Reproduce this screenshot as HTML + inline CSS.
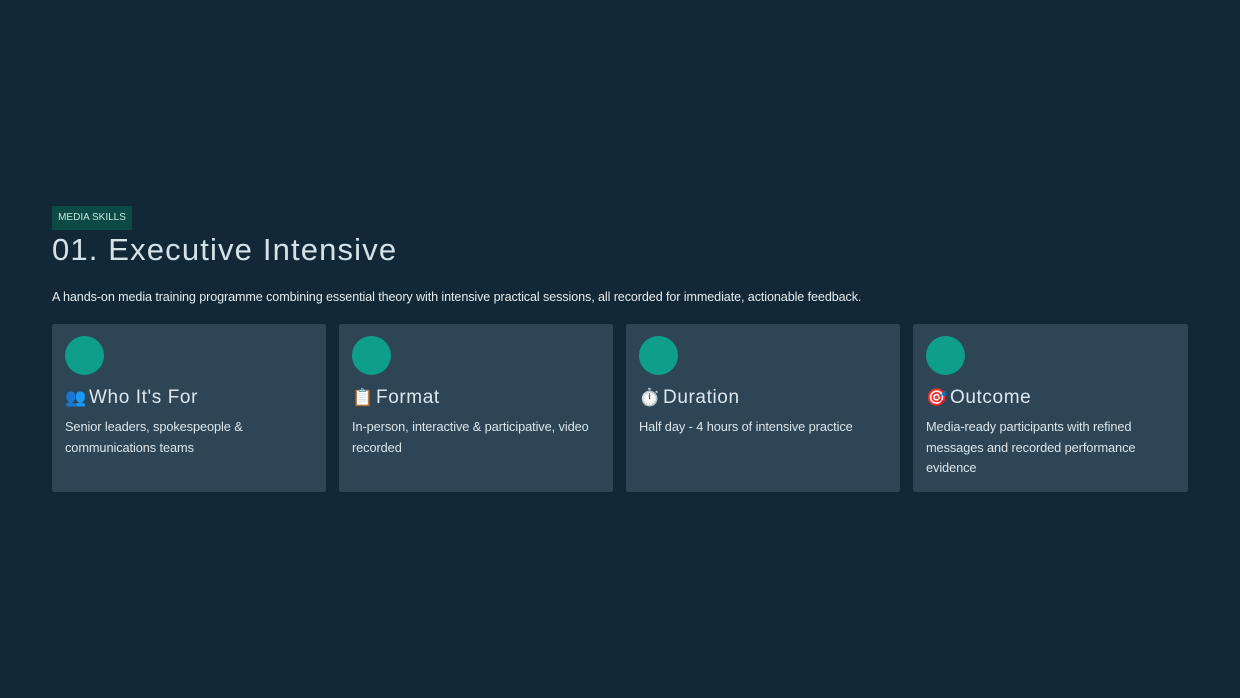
<!DOCTYPE html>
<html><head><meta charset="utf-8"><style>
*{margin:0;padding:0;box-sizing:border-box}
body{width:1240px;height:698px;background:#132836;font-family:"Liberation Sans",sans-serif;position:relative;overflow:hidden;color:#e6eef2}
.badge{position:absolute;left:52px;top:206px;height:24px;width:80px;background:#0b4a45;color:#c9e3de;font-size:10px;line-height:24px;text-align:center}
h1{position:absolute;left:52px;top:232px;font-size:31px;font-weight:normal;color:#d4e2ea;letter-spacing:1.15px;white-space:nowrap}
.desc{position:absolute;left:52px;top:290px;font-size:12.6px;color:#e3ebef;white-space:nowrap;letter-spacing:-0.1px}
.card{position:absolute;top:324px;width:274px;height:168px;background:#2e4555;border-radius:2px}
.c{position:absolute;left:13px;top:12px;width:39px;height:39px;border-radius:50%;background:#0f9e8a}
.t{position:absolute;left:13px;top:63px;font-size:19px;color:#dce7ee;white-space:nowrap;letter-spacing:0.6px}
.t span{display:inline-block;width:24px;font-size:17px;letter-spacing:0}
.b{position:absolute;left:13px;top:93px;width:245px;font-size:12.8px;line-height:20.7px;color:#dbe5ea;letter-spacing:-0.1px}
</style></head><body>
<div class="badge">MEDIA SKILLS</div>
<h1>01. Executive Intensive</h1>
<div class="desc">A hands-on media training programme combining essential theory with intensive practical sessions, all recorded for immediate, actionable feedback.</div>
<div class="card" style="left:52px"><div class="c"></div><div class="t"><span>👥</span>Who It's For</div><div class="b">Senior leaders, spokespeople &amp; communications teams</div></div>
<div class="card" style="left:339px"><div class="c"></div><div class="t"><span>📋</span>Format</div><div class="b">In-person, interactive &amp; participative, video recorded</div></div>
<div class="card" style="left:626px"><div class="c"></div><div class="t"><span>⏱️</span>Duration</div><div class="b">Half day - 4 hours of intensive practice</div></div>
<div class="card" style="left:913px;width:275px"><div class="c"></div><div class="t"><span>🎯</span>Outcome</div><div class="b" style="width:215px">Media-ready participants with refined messages and recorded performance evidence</div></div>
</body></html>
